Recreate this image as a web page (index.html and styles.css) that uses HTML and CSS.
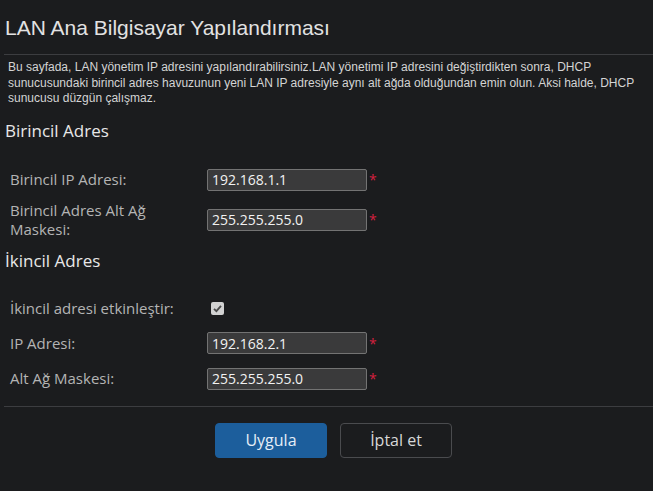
FILE: index.html
```html
<!DOCTYPE html>
<html lang="tr">
<head>
  <meta charset="UTF-8">
  <meta name="viewport" content="width=device-width, initial-scale=1.0">
  <title>LAN Ana Bilgisayar Yapılandırması</title>
  <link rel="stylesheet" href="styles.css">
</head>
<body>
  <div class="page">
    <h1 class="title">LAN Ana Bilgisayar Yapılandırması</h1>
    <p class="desc">Bu sayfada, LAN yönetim IP adresini yapılandırabilirsiniz.LAN yönetimi IP adresini değiştirdikten sonra, DHCP sunucusundaki birincil adres havuzunun yeni LAN IP adresiyle aynı alt ağda olduğundan emin olun. Aksi halde, DHCP sunucusu düzgün çalışmaz.</p>

    <h2 class="group">Birincil Adres</h2>
    <div class="row first">
      <label class="label" for="ip1">Birincil IP Adresi:</label>
      <input class="field" id="ip1" type="text" value="192.168.1.1">
      <span class="req">*</span>
    </div>
    <div class="row tall">
      <label class="label" for="mask1">Birincil Adres Alt Ağ Maskesi:</label>
      <input class="field" id="mask1" type="text" value="255.255.255.0">
      <span class="req">*</span>
    </div>

    <h2 class="group second">İkincil Adres</h2>
    <div class="row check-row">
      <span class="label">İkincil adresi etkinleştir:</span>
      <span class="check">
        <svg width="13" height="13" viewBox="0 0 13 13">
          <path d="M3 6.8 L5.4 9.2 L10 3.8" fill="none" stroke="#4a4a4a" stroke-width="1.8"/>
        </svg>
      </span>
    </div>
    <div class="row short">
      <label class="label" for="ip2">IP Adresi:</label>
      <input class="field" id="ip2" type="text" value="192.168.2.1">
      <span class="req">*</span>
    </div>
    <div class="row">
      <label class="label" for="mask2">Alt Ağ Maskesi:</label>
      <input class="field" id="mask2" type="text" value="255.255.255.0">
      <span class="req">*</span>
    </div>

    <div class="actions">
      <button class="btn primary">Uygula</button>
      <button class="btn">İptal et</button>
    </div>
  </div>
</body>
</html>
```

FILE: styles.css
```css
body {
  margin: 0;
  background: #1b1c1e;
  color: #d8d8d8;
  font-family: "Open Sans", "Noto Sans", sans-serif;
}
.page {
  margin-left: 4px;
}
.title {
  margin: 0;
  height: 55px;
  box-sizing: border-box;
  padding: 16px 0 0 1px;
  font-family: "Liberation Sans", Arial, sans-serif;
  font-size: 21px;
  font-weight: normal;
  color: #e2e2e2;
  border-bottom: 1px solid #3c3d40;
}
.desc {
  margin: 0;
  padding: 5px 4px 0 4px;
  font-family: "Liberation Sans", Arial, sans-serif;
  font-size: 12px;
  line-height: 15.5px;
  color: #d4d4d4;
}
.group {
  margin: 7px 0 0 0;
  height: 34px;
  line-height: 34px;
  padding-left: 1px;
  font-size: 17px;
  font-weight: normal;
  color: #e8e8e8;
}
.group.second {
  margin-top: 5px;
}
.row {
  display: flex;
  align-items: center;
  min-height: 36px;
  padding-left: 6px;
}
.row.first {
  margin-top: 14px;
}
.row.tall {
  margin-top: 3px;
  min-height: 38px;
}
.row.check-row {
  margin-top: 14px;
  min-height: 34px;
}
.row.short {
  min-height: 35px;
}
.label {
  width: 197px;
  flex-shrink: 0;
  font-size: 15px;
  line-height: 19px;
  color: #b4b4b4;
}
.row.tall .label {
  width: 170px;
  margin-right: 27px;
}
.field {
  width: 160px;
  height: 22px;
  box-sizing: border-box;
  padding: 0 4px;
  background: #3a3a3b;
  border: 1px solid #737373;
  border-radius: 2px;
  color: #f2f2f2;
  font-family: "Open Sans", "Noto Sans", sans-serif;
  font-size: 14px;
  outline: none;
}
.req {
  align-self: flex-start;
  margin: 11px 0 0 2px;
  color: #d4203e;
  font-size: 14px;
  line-height: 14px;
}
.row.tall .req {
  margin-top: 12px;
}
.check {
  display: flex;
  width: 13px;
  height: 13px;
  margin-left: 4px;
  background: #d2d2d2;
  border-radius: 2px;
}
.actions {
  display: flex;
  justify-content: center;
  gap: 13px;
  margin-top: 9px;
  padding: 16px 0 0 10px;
  border-top: 1px solid #3c3d40;
}
.btn {
  width: 112px;
  height: 35px;
  background: transparent;
  border: 1px solid #4a4b4e;
  border-radius: 4px;
  color: #d8d8d8;
  font-family: "Open Sans", "Noto Sans", sans-serif;
  font-size: 16px;
}
.btn.primary {
  background: #1c5e9c;
  border-color: #1c5e9c;
  color: #e6eef7;
}
```
